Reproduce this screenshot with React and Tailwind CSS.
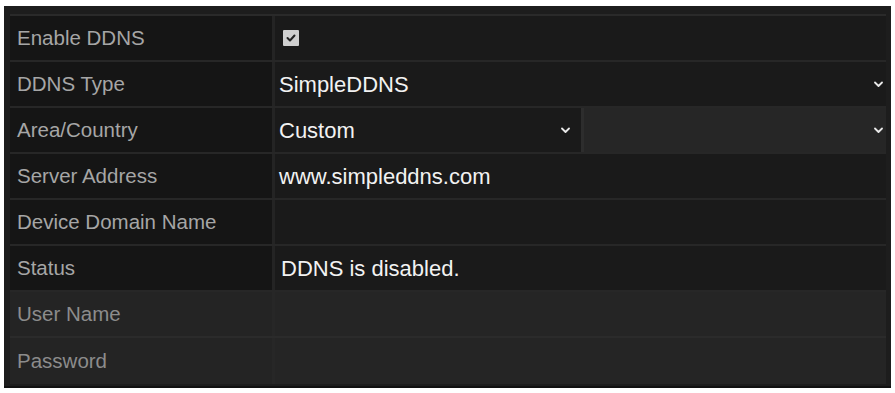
import React from "react";

function Caret({ className = "" }) {
  return (
    <svg width="9" height="7" viewBox="0 0 9 7" className={className}>
      <path d="M1 1.5 L4.5 5 L8 1.5" stroke="#e8e8e8" strokeWidth="1.8" fill="none" strokeLinecap="round" strokeLinejoin="round" />
    </svg>
  );
}

function Row({ label, children, dim = false, last = false }) {
  return (
    <div className={`flex h-[46px] ${last ? "" : "border-b-2"} ${dim ? "border-[#2b2b2b]" : "border-[#272727]"}`}>
      <div
        className={`w-[262px] shrink-0 flex items-center pl-[7px] pt-[1px] text-[20.5px] ${
          dim ? "bg-[#242424] text-[#8c8c8c]" : "bg-[#151515] text-[#a6a6a6]"
        }`}
      >
        {label}
      </div>
      <div className={`w-[3px] shrink-0 ${dim ? "bg-[#272727]" : "bg-[#242424]"}`} />
      <div className={`flex-1 flex items-center text-[22px] text-[#f2f2f2] ${dim ? "bg-[#252525]" : "bg-[#1a1a1a]"}`}>
        {children}
      </div>
    </div>
  );
}

export default function App() {
  return (
    <div className="w-[895px] h-[393px] bg-white pt-[6px] pl-[4px]" style={{ fontFamily: '"Liberation Sans", Arial, sans-serif' }}>
      <div className="w-[887px] h-[382px] bg-[#1d1d1d] pt-[8px] pl-[6px] pr-[5px] pb-[3px] border-b-2 border-[#111]">
        <div className="border-t-2 border-[#2a2a2a]">
          <Row label="Enable DDNS">
            <div className="ml-[8px] w-[16px] h-[16px] bg-[#cfcfcf] rounded-[1px] flex items-center justify-center">
              <svg width="10" height="8" viewBox="0 0 10 8">
                <path d="M1.5 4 L4 6.5 L8.5 1.5" stroke="#222" strokeWidth="2" fill="none" strokeLinecap="round" strokeLinejoin="round" />
              </svg>
            </div>
          </Row>
          <Row label="DDNS Type">
            <div className="flex-1 flex items-center justify-between pl-[4px] pr-[3px]">
              <span>SimpleDDNS</span>
              <Caret />
            </div>
          </Row>
          <Row label="Area/Country">
            <div className="flex-1 h-full flex">
              <div className="w-[306px] flex items-center justify-between pl-[4px] pr-[11px] bg-[#1a1a1a]">
                <span>Custom</span>
                <Caret />
              </div>
              <div className="w-[3px] bg-[#2d2d2d]" />
              <div className="flex-1 flex items-center justify-end pr-[3px] bg-[#262626]">
                <Caret />
              </div>
            </div>
          </Row>
          <Row label="Server Address">
            <span className="pl-[4px]">www.simpleddns.com</span>
          </Row>
          <Row label="Device Domain Name" />
          <Row label="Status">
            <span className="pl-[6px]">DDNS is disabled.</span>
          </Row>
          <Row label="User Name" dim />
          <Row label="Password" dim last />
        </div>
      </div>
    </div>
  );
}
